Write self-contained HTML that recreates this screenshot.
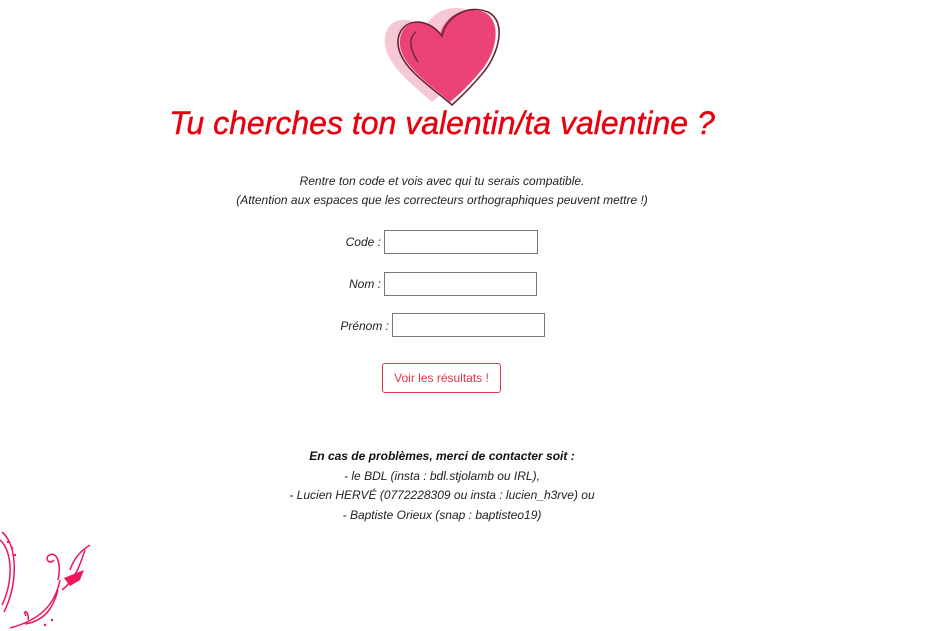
<!DOCTYPE html>
<html><head><meta charset="utf-8"><style>
body{margin:0;width:934px;height:631px;background:#fff;position:relative;overflow:hidden;font-family:"Liberation Sans",sans-serif;color:#222}
.a{position:absolute;white-space:nowrap}
.c{left:0;width:884px;text-align:center}
.t{font-style:italic;font-size:12px}
.inp{position:absolute;border:1px solid #777;height:22px;box-sizing:border-box}
.lab{position:absolute;font-style:italic;font-size:12px;text-align:right}
</style></head><body>
<svg class="a" style="left:380px;top:2px" width="130" height="104" viewBox="0 0 130 104">
<path d="M52 100 C30 80 2 60 5 35 C8 15 30 12 45 28 C50 10 70 2 88 8 C105 16 100 45 85 65 C75 80 62 92 52 100Z" fill="#f6c8d5"/>
<path d="M70 100 C50 82 18 62 20 38 C22 18 45 14 60 32 C66 12 86 4 104 10 C122 18 118 50 100 70 C90 82 80 92 70 100Z" fill="#ec4377"/>
<path d="M72 103 C52 85 16 64 18 38 C20 18 45 12 62 34 C66 14 88 2 108 10 C128 20 118 54 102 72 C92 84 82 94 72 103Z" fill="none" stroke="#6b2535" stroke-width="1.6"/>
<path d="M38 60 C30 48 28 36 36 30" fill="none" stroke="#6b2535" stroke-width="1.4"/>
</svg>
<div class="a c" style="top:105px;font-size:32px;font-style:italic;color:#e8000f;left:-8px;width:900px;-webkit-text-stroke:0.4px #e8000f">Tu cherches ton valentin/ta valentine ?</div>
<div class="a c t" style="top:174px">Rentre ton code et vois avec qui tu serais compatible.</div>
<div class="a c t" style="top:193px">(Attention aux espaces que les correcteurs orthographiques peuvent mettre !)</div>
<div class="lab" style="left:300px;width:81px;top:235px">Code :</div>
<div class="inp" style="left:384px;top:230px;width:154px;height:24px"></div>
<div class="lab" style="left:300px;width:81px;top:277px">Nom :</div>
<div class="inp" style="left:384px;top:272px;width:153px;height:24px"></div>
<div class="lab" style="left:300px;width:89px;top:319px">Prénom :</div>
<div class="inp" style="left:392px;top:313px;width:153px;height:24px"></div>
<div class="a" style="left:382px;top:363px;width:119px;height:30px;box-sizing:border-box;border:1px solid #dc3545;border-radius:3px;color:#dc3545;font-size:12px;text-align:center;line-height:28px">Voir les résultats !</div>
<div class="a c t" style="top:449px;font-weight:bold;color:#111">En cas de problèmes, merci de contacter soit :</div>
<div class="a c t" style="top:469px">- le BDL (insta : bdl.stjolamb ou IRL),</div>
<div class="a c t" style="top:488px">- Lucien HERVÉ (0772228309 ou insta : lucien_h3rve) ou</div>
<div class="a c t" style="top:508px">- Baptiste Orieux (snap : baptisteo19)</div>
<svg class="a" style="left:0;top:520px" width="110" height="111" viewBox="0 0 110 111">
<g fill="none" stroke="#f0145a" stroke-width="1.5">
<path d="M0 20 C12 30 14 60 2 85"/><path d="M2 12 C18 25 18 65 4 92"/>
<path d="M10 108 C40 100 55 85 60 60"/><path d="M25 104 C50 100 55 80 58 70"/>
<path d="M58 60 C62 40 55 30 48 36 C45 40 50 45 54 40"/>
<path d="M62 70 C75 60 80 45 85 30"/><path d="M70 50 C75 35 85 28 90 25"/>
<path d="M28 100 C30 92 22 88 26 96"/>
</g>
<path d="M64 58 L84 50 L80 60 L70 66Z" fill="#f0145a"/>
<g fill="#f0145a"><circle cx="8" cy="22" r="1.2"/><circle cx="12" cy="28" r="1.2"/><circle cx="15" cy="35" r="1.2"/><circle cx="45" cy="105" r="1.2"/><circle cx="52" cy="100" r="1.2"/></g>
</svg>
</body></html>
